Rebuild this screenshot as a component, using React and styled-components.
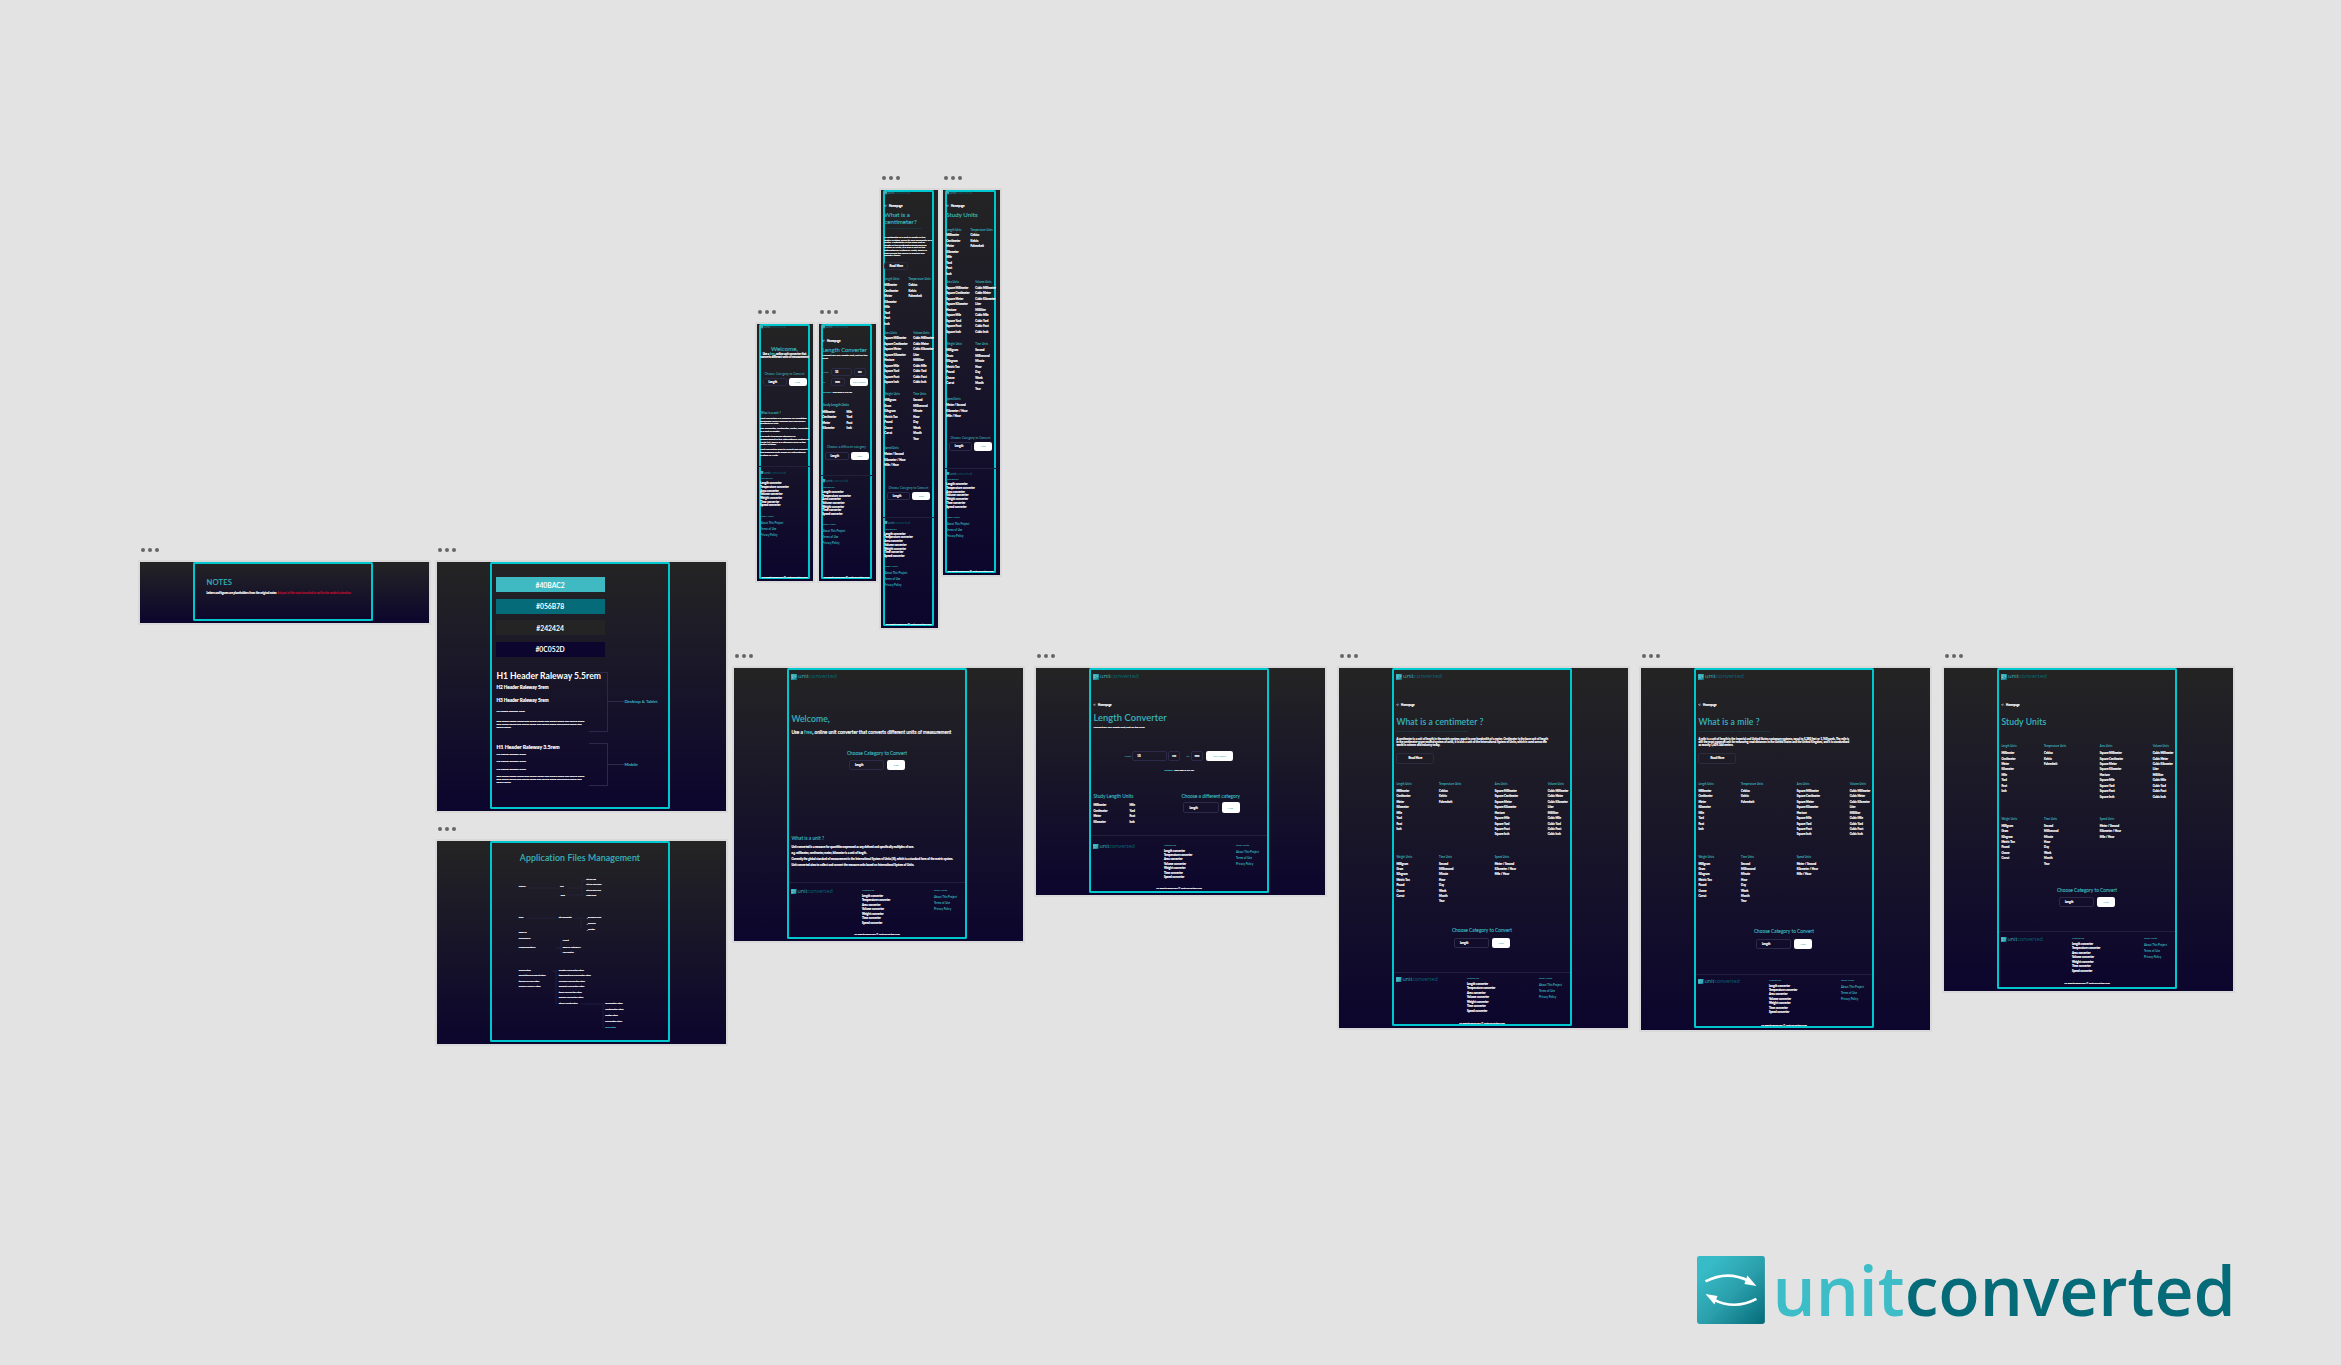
import React from "react";
import styled, { createGlobalStyle, css } from "styled-components";
import { ArrowLeft } from "lucide-react";

const TEAL = "#38B6BE";
const DEEP = "#056B78";
const LINE = "#2b2a48";
const FONT = `Lato, "Noto Sans", sans-serif`;

const inked = css`
  -webkit-text-stroke: 0.16px currentColor;
`;

const Global = createGlobalStyle`
  html, body { margin: 0; padding: 0; background: #e3e3e3; }
  * { box-sizing: border-box; }
`;

const Canvas = styled.main`
  position: relative;
  width: 2341px;
  height: 1365px;
  overflow: hidden;
  background: #e3e3e3;
  font-family: ${FONT};
`;

const FrameBox = styled.section`
  position: absolute;
  left: ${(p) => p.$x}px;
  top: ${(p) => p.$y}px;
  width: ${(p) => p.$w}px;
  height: ${(p) => p.$h}px;
  background: linear-gradient(180deg, #242424 0%, #0c052d 100%);
  box-shadow: 0 0 0 2px #d9d9d9;
`;

const Dots = styled.div`
  position: absolute;
  left: 1px;
  top: -14px;
  display: flex;
  gap: 3px;
  span {
    width: 4px;
    height: 4px;
    border-radius: 50%;
    background: #666;
  }
`;

const Page = styled.div`
  position: relative;
  display: flex;
  flex-direction: column;
  width: ${(p) => (p.$mobile ? 51 : 180)}px;
  height: calc(100% - 2px);
  margin-left: ${(p) => (p.$mobile ? 2 : 53)}px;
  padding: 0 ${(p) => (p.$mobile ? 1.3 : 4.4)}px;
  border-radius: 1.5px;
  box-shadow: inset 0 0 0 2px #00c6ce;
`;

const LogoRow = styled.div`
  display: flex;
  align-items: center;
  align-self: flex-start;
  flex: none;
  margin-top: ${(p) => p.$mt || 0}px;
  gap: ${(p) => p.$size * 0.11}px;
  font-family: "Open Sans", ${FONT};
  font-size: ${(p) => p.$size * 0.97}px;
  line-height: 1;
  font-weight: ${(p) => (p.$big ? 600 : 400)};
  white-space: nowrap;
  svg {
    display: block;
    flex: none;
    width: ${(p) => p.$size * 0.97}px;
    height: ${(p) => p.$size * 0.97}px;
  }
  b {
    font-weight: inherit;
    color: ${(p) => (p.$big ? "#3cbdc8" : TEAL)};
  }
  i {
    font-style: normal;
    color: ${DEEP};
  }
`;

const Logo = ({ size, mt, big }) => (
  <LogoRow $size={size} $mt={mt} $big={big}>
    <svg viewBox="0 0 68 68" aria-hidden="true">
      <defs>
        <linearGradient id="logoFill" x1="0" y1="0" x2="1" y2="1">
          <stop offset="0.15" stopColor="#37bcc7" />
          <stop offset="0.55" stopColor="#2a9eab" />
          <stop offset="1" stopColor="#056b78" />
        </linearGradient>
      </defs>
      <rect width="68" height="68" rx="2.5" fill="url(#logoFill)" />
      <path d="M8.5 25.5Q30 14 52 25" fill="none" stroke="#fff" strokeWidth="2.6" />
      <path d="M59.5 30L50.5 19.5L47.5 28Z" fill="#fff" />
      <path d="M59.5 43Q38 54.5 16 43.5" fill="none" stroke="#fff" strokeWidth="2.6" />
      <path d="M8.5 38L17.5 48.5L20.5 40Z" fill="#fff" />
    </svg>
    <span>
      <b>unit</b>
      <i>converted</i>
    </span>
  </LogoRow>
);

const BigLogo = styled.div`
  position: absolute;
  left: 1697px;
  top: 1256px;
`;

const Back = styled.div`
  display: flex;
  align-items: center;
  gap: 1.2px;
  margin-top: ${(p) => p.$mt}px;
  height: 3px;
  font-size: 2.8px;
  font-weight: 700;
  color: #fff;
  ${inked}
  svg {
    width: 3.5px;
    height: 3.5px;
  }
`;

const Title = styled.h1`
  margin: ${(p) => p.$mt}px 0 0;
  padding-left: ${(p) => p.$indent || 0}px;
  font-size: ${(p) => p.$size}px;
  line-height: ${(p) => p.$lh}px;
  font-weight: 500;
  letter-spacing: ${(p) => p.$ls ?? 0.12}px;
  color: ${TEAL};
  text-align: ${(p) => (p.$center ? "center" : "left")};
  -webkit-text-stroke: 0.12px currentColor;
`;

const Faint = styled.div`
  margin-top: ${(p) => p.$mt}px;
  font-size: ${(p) => p.$size || 2.6}px;
  line-height: 3px;
  color: #0f5866;
  white-space: nowrap;
  overflow: hidden;
`;

const Copy = styled.p`
  margin: ${(p) => p.$mt || 0}px 0 0;
  padding-left: ${(p) => p.$indent || 0}px;
  max-width: ${(p) => p.$w || 400}px;
  font-size: ${(p) => p.$size}px;
  line-height: ${(p) => p.$lh}px;
  font-weight: ${(p) => p.$weight || 700};
  color: #fff;
  text-align: ${(p) => (p.$center ? "center" : "left")};
  white-space: ${(p) => (p.$line ? "nowrap" : "normal")};
  ${inked}
  em {
    font-style: normal;
    color: ${TEAL};
  }
  u {
    text-decoration: none;
    color: #b3102f;
  }
`;

const UnitLines = styled.div`
  margin-top: 3.3px;
`;

const Ghost = styled.div`
  display: flex;
  align-items: center;
  justify-content: center;
  flex: none;
  margin-top: ${(p) => p.$mt}px;
  width: ${(p) => p.$w}px;
  height: ${(p) => p.$h}px;
  border: 1px solid #2c2c40;
  border-radius: 2.5px;
  font-size: 2.8px;
  font-weight: 700;
  color: #fff;
  ${inked}
`;

const UnitRow = styled.div`
  display: grid;
  grid-template-columns: ${(p) => p.$cols};
  margin-top: ${(p) => p.$mt}px;
`;

const UnitColumn = styled.div`
  display: flex;
  flex-direction: column;
  h4 {
    margin: 0 0 ${(p) => p.$gap}px;
    font-size: 2.7px;
    line-height: 3px;
    font-weight: 700;
    color: ${TEAL};
    white-space: nowrap;
  }
  span {
    font-size: 2.8px;
    line-height: ${(p) => p.$step}px;
    font-weight: 700;
    color: #fff;
    white-space: nowrap;
    ${inked}
  }
`;

const Units = ({ title, items, gap = 3.1, step = 5.4 }) => (
  <UnitColumn $gap={gap} $step={step}>
    <h4>{title}</h4>
    {items.map((t) => (
      <span key={t}>{t}</span>
    ))}
  </UnitColumn>
);

const Chooser = styled.div`
  display: flex;
  flex-direction: column;
  align-items: ${(p) => (p.$left ? "flex-start" : "center")};
  flex: none;
  margin-top: ${(p) => p.$mt}px;
`;

const ChooserTitle = styled.div`
  font-size: ${(p) => p.$size}px;
  line-height: 6px;
  font-weight: 500;
  color: ${TEAL};
  white-space: nowrap;
  ${(p) => p.$size > 4 && "-webkit-text-stroke: 0.1px currentColor;"}
`;

const PickRow = styled.div`
  display: flex;
  gap: ${(p) => (p.$small ? 2 : 2.7)}px;
  margin-top: ${(p) => p.$mt}px;
  margin-left: ${(p) => p.$shift || 0}px;
`;

const Field = styled.div`
  display: flex;
  align-items: center;
  flex: none;
  width: ${(p) => p.$w}px;
  height: ${(p) => p.$h}px;
  padding-left: ${(p) => p.$pad ?? 5}px;
  border: 1px solid ${LINE};
  border-radius: 2px;
  font-size: 2.8px;
  font-weight: 700;
  color: #fff;
  ${inked}
`;

const WhiteButton = styled.div`
  display: flex;
  align-items: center;
  justify-content: center;
  flex: none;
  width: ${(p) => p.$w}px;
  height: ${(p) => p.$h}px;
  border-radius: 2.2px;
  background: #fff;
  font-size: 2.6px;
  color: #2aa5ad;
`;

const Picker = ({ title, mt, pickMt = 4, size = 4.8, w = 35.5, h = 10.4, bw = 18, small, left, shift }) => (
  <Chooser $mt={mt} $left={left}>
    <ChooserTitle $size={size}>{title}</ChooserTitle>
    <PickRow $mt={pickMt} $small={small} $shift={shift}>
      <Field $w={w} $h={h}>Length</Field>
      <WhiteButton $w={bw} $h={h}>Find</WhiteButton>
    </PickRow>
  </Chooser>
);

const Divider = styled.hr`
  flex: none;
  margin: ${(p) => p.$mt}px -2px 0;
  height: 1px;
  border: 0;
  background: #22213c;
`;

const FooterGrid = styled.div`
  display: grid;
  grid-template-columns: 70.5px 72px 1fr;
  align-items: start;
  padding-top: ${(p) => p.$top}px;
`;

const FooterStack = styled.div`
  display: flex;
  flex-direction: column;
  padding-top: 3.2px;
`;

const FootHead = styled.h5`
  margin: ${(p) => p.$mt || 0}px 0 2px;
  font-size: 2.6px;
  line-height: 3px;
  font-weight: 700;
  color: ${TEAL};
  white-space: nowrap;
`;

const FootList = styled.div`
  display: flex;
  flex-direction: column;
  span {
    font-size: 2.8px;
    line-height: ${(p) => p.$step}px;
    font-weight: 700;
    color: #fff;
    white-space: nowrap;
    ${inked}
  }
`;

const FootLinks = styled.div`
  display: flex;
  flex-direction: column;
  span {
    font-size: 2.8px;
    line-height: 6px;
    font-weight: 700;
    color: ${TEAL};
    white-space: nowrap;
  }
`;

const Rights = styled.div`
  margin-top: auto;
  margin-bottom: ${(p) => p.$mb}px;
  font-size: 2.5px;
  line-height: 3px;
  font-weight: 700;
  text-align: center;
  color: #fff;
  white-space: nowrap;
  ${inked}
`;

const CATEGORIES = ["Length converter", "Temperature converter", "Area converter", "Volume converter", "Weight converter", "Time converter", "Speed converter"];
const LINKS = ["About This Project", "Terms of Use", "Privacy Policy"];

const Footer = ({ top = 3.8, mt, mb = 3, mobile }) => (
  <>
    <Divider $mt={mt} />
    {mobile ? (
      <FooterStack>
        <Logo size={3.5} />
        <FootHead $mt={3.3}>Categories</FootHead>
        <FootList $step={3.7}>{CATEGORIES.map((t) => <span key={t}>{t}</span>)}</FootList>
        <FootHead $mt={6.5}>Study Units</FootHead>
        <FootLinks>{LINKS.map((t) => <span key={t}>{t}</span>)}</FootLinks>
      </FooterStack>
    ) : (
      <FooterGrid $top={top}>
        <Logo size={5.6} />
        <div>
          <FootHead>Categories</FootHead>
          <FootList $step={4.45}>{CATEGORIES.map((t) => <span key={t}>{t}</span>)}</FootList>
        </div>
        <div>
          <FootHead>Study Units</FootHead>
          <FootLinks>{LINKS.map((t) => <span key={t}>{t}</span>)}</FootLinks>
        </div>
      </FooterGrid>
    )}
    <Rights $mb={mb}>All Rights Reserved © unitconverted.com</Rights>
  </>
);

const LENGTH = ["Millimeter", "Centimeter", "Meter", "Kilometer", "Mile", "Yard", "Foot", "Inch"];
const TEMP = ["Celsius", "Kelvin", "Fahrenheit"];
const AREA = ["Square Millimeter", "Square Centimeter", "Square Meter", "Square Kilometer", "Hectare", "Square Mile", "Square Yard", "Square Foot", "Square Inch"];
const VOLUME = ["Cubic Millimeter", "Cubic Meter", "Cubic Kilometer", "Liter", "Milliliter", "Cubic Mile", "Cubic Yard", "Cubic Foot", "Cubic Inch"];
const WEIGHT = ["Milligram", "Gram", "Kilogram", "Metric Ton", "Pound", "Ounce", "Carrat"];
const TIME = ["Second", "Millisecond", "Minute", "Hour", "Day", "Week", "Month", "Year"];
const SPEED = ["Meter / Second", "Kilometer / Hour", "Mile / Hour"];

const DeskUnits = ({ mt }) => (
  <>
    <UnitRow $mt={mt} $cols="42.7px 55.7px 53px 1fr">
      <Units title="Length Units" items={LENGTH} />
      <Units title="Temperature Units" items={TEMP} />
      <Units title="Area Units" items={AREA} />
      <Units title="Volume Units" items={VOLUME} />
    </UnitRow>
    <UnitRow $mt={17.8} $cols="42.7px 55.7px 53px 1fr">
      <Units title="Weight Units" items={WEIGHT} />
      <Units title="Time Units" items={TIME} />
      <Units title="Speed Units" items={SPEED} />
    </UnitRow>
  </>
);

const MobileUnits = ({ mt, gaps }) => (
  <>
    <UnitRow $mt={mt} $cols="24.3px 1fr">
      <Units title="Length Units" items={LENGTH} gap={1.7} step={5.5} />
      <Units title="Temperature Units" items={TEMP} gap={1.7} step={5.5} />
    </UnitRow>
    <UnitRow $mt={gaps[0]} $cols="29px 1fr">
      <Units title="Area Units" items={AREA} gap={1.7} step={5.5} />
      <Units title="Volume Units" items={VOLUME} gap={1.7} step={5.5} />
    </UnitRow>
    <UnitRow $mt={gaps[1]} $cols="29px 1fr">
      <Units title="Weight Units" items={WEIGHT} gap={1.7} step={5.5} />
      <Units title="Time Units" items={TIME} gap={1.7} step={5.5} />
    </UnitRow>
    <UnitRow $mt={gaps[2]} $cols="29px 1fr">
      <Units title="Speed Units" items={SPEED} gap={1.7} step={5.5} />
    </UnitRow>
  </>
);

const WHAT_CM = "A centimeter is a unit of length in the metric system, equal to one hundredth of a meter. Centimeter is the base unit of length in the centimetre-gram-second system of units, it is also a unit of the International System of Units, which is used across the world in science and industry today.";
const WHAT_MI = "A mile is a unit of length in the imperial and United States customary systems, equal to 5,280 feet or 1,760 yards. The mile is still the most common unit for measuring road distances in the United States and the United Kingdom, and it is standardised as exactly 1,609.344 meters.";
const UNIT_LINES = [
  "Unit converted is a measure for quantities expressed as any defined and specifically multiples of one.",
  "e.g. millimeter, centimeter, meter, kilometer is a unit of length.",
  "Currently the global standard of measurement is the International System of Units (SI), which is a standard form of the metric system.",
  "Unit converted aims to collect and convert the measure units based on International System of Units.",
];

const Frame = ({ x, y, w = 289, h, children }) => (
  <FrameBox $x={x} $y={y} $w={w} $h={h}>
    <Dots><span /><span /><span /></Dots>
    {children}
  </FrameBox>
);

const ArticlePage = ({ title, text, extra = 0 }) => (
  <Page>
    <Logo size={6.15} mt={6} />
    <Back $mt={23.5}><ArrowLeft strokeWidth={2.5} />Homepage</Back>
    <Title $mt={10.5} $size={8.6} $lh={10}>{title}</Title>
    <Faint $mt={3.5}>Convert centimeter to any other length unit with unitconverted</Faint>
    <Copy $mt={4.5} $size={2.75} $lh={3} $w={152}>{text}</Copy>
    <Ghost $mt={6} $w={38} $h={11}>Read More</Ghost>
    <DeskUnits mt={19} />
    <Picker title="Choose Category to Convert" mt={22 + extra} pickMt={4.7} />
    <Footer mt={24.3} top={3.8} mb={1} />
  </Page>
);

const Label = styled.span`
  font-size: 2.6px;
  font-weight: 700;
  color: ${TEAL};
`;

const FormRow = styled.div`
  display: flex;
  align-items: center;
  justify-content: ${(p) => (p.$left ? "flex-start" : "center")};
  gap: ${(p) => p.$gap || 1}px;
  margin-top: ${(p) => p.$mt}px;
`;

const Pad = styled.span`
  flex: none;
  width: ${(p) => p.$w}px;
`;

const TwoCol = styled.div`
  display: grid;
  grid-template-columns: 88px 1fr;
  margin-top: ${(p) => p.$mt}px;
`;

const StudyTitle = styled.div`
  font-size: ${(p) => p.$size}px;
  line-height: ${(p) => p.$lh || 6}px;
  font-weight: 500;
  color: ${TEAL};
  white-space: nowrap;
  margin-top: ${(p) => p.$mt || 0}px;
  -webkit-text-stroke: 0.1px currentColor;
`;

const Pairs = styled.div`
  display: grid;
  grid-template-columns: ${(p) => p.$col}px 1fr;
  margin-top: ${(p) => p.$mt}px;
  span {
    font-size: 2.8px;
    line-height: 5.4px;
    font-weight: 700;
    color: #fff;
    ${inked}
  }
`;

const PAIRS = ["Millimeter", "Mile", "Centimeter", "Yard", "Meter", "Foot", "Kilometer", "Inch"];

/* style guide */
const Swatch = styled.div`
  display: flex;
  align-items: center;
  justify-content: center;
  width: 109px;
  height: 15px;
  margin: ${(p) => p.$mt}px 0 0 1.2px;
  background: ${(p) => p.$c};
  color: #fff;
  font-size: 6.8px;
  font-weight: 700;
`;

const TypeRow = styled.div`
  display: flex;
  align-items: center;
  margin-top: ${(p) => p.$mt}px;
  margin-left: 2px;
`;

const TypeBox = styled.div`
  position: relative;
  flex: none;
  width: 112px;
  height: ${(p) => p.$h}px;
  border-right: 1px solid ${LINE};
  &::before,
  &::after {
    content: "";
    position: absolute;
    right: 0;
    width: 18px;
    height: 1px;
    background: ${LINE};
  }
  &::before { top: 0; }
  &::after { bottom: 0; }
`;

const Wire = styled.span`
  flex: none;
  width: 16px;
  height: 1px;
  background: ${LINE};
`;

const TypeLabel = styled.span`
  font-size: 4.4px;
  font-weight: 500;
  color: ${TEAL};
  white-space: nowrap;
  -webkit-text-stroke: 0.1px currentColor;
`;

const Sample = styled.div`
  margin-top: ${(p) => p.$mt}px;
  font-size: ${(p) => p.$size}px;
  line-height: ${(p) => p.$lh}px;
  font-weight: 700;
  color: #fff;
  white-space: ${(p) => (p.$wrap ? "normal" : "nowrap")};
  max-width: 92px;
  ${(p) => p.$size < 5.5 && inked}
`;

const LOREM = "quis dolore sapien ipsum quis dolore ipsum quis dolore ipsum quis dolore ipsum quis dolore ipsum quis dolore ipsum quis dolore ipsum quis dolore ipsum quis dolore ipsum";

/* file tree */
const FileTitle = styled.h2`
  margin: 11px 0 0;
  font-size: 8.8px;
  line-height: 11px;
  font-weight: 500;
  letter-spacing: 0.12px;
  text-align: center;
  color: ${TEAL};
  -webkit-text-stroke: 0.12px currentColor;
`;

const FileNode = styled.span`
  position: absolute;
  left: ${(p) => p.$x}px;
  top: ${(p) => p.$y - 1.5}px;
  font-size: 2.6px;
  line-height: 3px;
  font-weight: 700;
  white-space: nowrap;
  color: ${(p) => (p.$on ? TEAL : "#fff")};
  ${inked}
`;

const TreeLines = styled.svg`
  position: absolute;
  left: 0;
  top: 0;
  width: 180px;
  height: 200px;
  pointer-events: none;
`;

const TREE = [
  [28.7, 45.7, "public"], [70, 45.7, "css"], [70.7, 54, "img"],
  [96.3, 38, "style.css"], [96.3, 43, "style.css.map"], [96.3, 49, "style.min.css"], [96.3, 54, "logo.png"],
  [28.7, 76, "scss"], [68.7, 76, "stylesheets"], [96.7, 76, "_globals.scss"], [96.7, 82, "_mobile"], [96.7, 88, "_footer"],
  [28.7, 91, "main.js"], [28.7, 97.7, "libraries.js"], [28.7, 106, "components.js"],
  [72.7, 99.7, "chart"], [72.7, 106, "search category"], [72.7, 111.7, "calculator"],
  [28.7, 129.7, "index.html"], [28.7, 134.7, "about-this-project.html"], [28.7, 140.7, "terms-of-use.html"], [28.7, 145.7, "privacy-policy.html"],
  [68.7, 129.7, "length-converter.html"], [68.7, 134.7, "temperature-converter.html"], [68.7, 140.7, "volume-converter.html"], [68.7, 145.7, "weight-converter.html"], [68.7, 151.7, "time-converter.html"], [68.7, 156.7, "speed-converter.html"], [68.7, 162.7, "study-units.html"],
  [115.3, 162.7, "millimeter.html"], [115.3, 168.7, "centimeter.html"], [115.3, 174.7, "meter.html"], [115.3, 180.7, "kilometer.html"], [115.3, 186.7, "mile.html", true],
];

const App = () => (
  <>
    <Global />
    <Canvas>
      <Frame x={140} y={562} h={60.5}>
        <Page>
          <Title $mt={16} $size={7.6} $lh={8} $ls={0.2} $indent={9}>NOTES</Title>
          <Copy $mt={5.5} $size={2.7} $lh={3} $indent={9} $line>
            Letters and figures are placeholders from the original notes <u>this part of the note is marked in red for the reader's attention</u>
          </Copy>
        </Page>
      </Frame>

      <Frame x={437} y={562} h={248.5}>
        <Page>
          <Swatch $mt={15} $c="#40BAC2">#40BAC2</Swatch>
          <Swatch $mt={6.6} $c="#056B78">#056B78</Swatch>
          <Swatch $mt={6.6} $c="#242424">#242424</Swatch>
          <Swatch $mt={6.6} $c="#0C052D">#0C052D</Swatch>
          <TypeRow $mt={15}>
            <TypeBox $h={60}>
              <Sample $mt={0} $size={8.6} $lh={9}>H1 Header Raleway 5.5rem</Sample>
              <Sample $mt={3.5} $size={4.6} $lh={6}>H2 Header Raleway 5rem</Sample>
              <Sample $mt={7} $size={4.6} $lh={6}>H3 Header Raleway 5rem</Sample>
              <Sample $mt={6.5} $size={2.5} $lh={3}>H4 Header Raleway 2rem</Sample>
              <Sample $mt={7} $size={2.5} $lh={3.1} $wrap>{LOREM}</Sample>
            </TypeBox>
            <Wire />
            <TypeLabel>Desktop &amp; Tablet</TypeLabel>
          </TypeRow>
          <TypeRow $mt={11}>
            <TypeBox $h={43}>
              <Sample $mt={1} $size={5.2} $lh={6}>H1 Header Raleway 3.5rem</Sample>
              <Sample $mt={3.5} $size={2.6} $lh={3}>H2 Header Raleway 2rem</Sample>
              <Sample $mt={4} $size={2.6} $lh={3}>H3 Header Raleway 2rem</Sample>
              <Sample $mt={5} $size={2.6} $lh={3}>H4 Header Raleway 2rem</Sample>
              <Sample $mt={3.5} $size={2.5} $lh={3.1} $wrap>{LOREM}</Sample>
            </TypeBox>
            <Wire />
            <TypeLabel>Mobile</TypeLabel>
          </TypeRow>
        </Page>
      </Frame>

      <Frame x={437} y={841} h={202.5}>
        <Page>
          <FileTitle>Application Files Management</FileTitle>
          <TreeLines viewBox="0 0 180 200" fill="none" stroke={LINE} strokeWidth="0.6">
            <path d="M38 47H68M78 47H92M92 38V54M74 54H94M92 40H95" />
            <path d="M38 77H66M84 77H94M91 77V88M66 107H71M71 100V112" />
            <path d="M62 130H67M66 130V163M90 163H113M113 163V187" />
          </TreeLines>
          {TREE.map(([x, y, t, on]) => (
            <FileNode key={t + y} $x={x} $y={y} $on={on}>{t}</FileNode>
          ))}
        </Page>
      </Frame>

      <Frame x={734} y={668} h={272.5}>
        <Page>
          <Logo size={6.15} mt={6} />
          <Title $mt={34} $size={8.6} $lh={10}>Welcome,</Title>
          <Copy $mt={5.3} $size={4.7} $lh={6} $weight={600}>Use a <em>free</em>, online unit converter that converts different units of measurement</Copy>
          <Picker title="Choose Category to Convert" mt={14.4} />
          <StudyTitle $mt={65} $size={4.8}>What is a unit ?</StudyTitle>
          <UnitLines>
            {UNIT_LINES.map((t) => <Copy key={t} $size={2.75} $lh={6}>{t}</Copy>)}
          </UnitLines>
          <Footer mt={13.7} top={5.8} mb={3} />
        </Page>
      </Frame>

      <Frame x={1036} y={668} h={227}>
        <Page>
          <Logo size={6.15} mt={6} />
          <Back $mt={23.5}><ArrowLeft strokeWidth={2.5} />Homepage</Back>
          <Title $mt={6.5} $size={9.3} $lh={10}>Length Converter</Title>
          <Copy $mt={3.5} $size={2.6} $lh={3}>Convert any any length unit, just fill the form</Copy>
          <FormRow $mt={21.5} $gap={1}>
            <Label>From:</Label>
            <Field $w={35} $h={10.2} $pad={4}>10</Field>
            <Field $w={12} $h={10.2} $pad={3}>cm</Field>
            <Pad $w={4} />
            <Label>To:</Label>
            <Field $w={12.5} $h={10.2} $pad={3}>mm</Field>
            <Pad $w={1} />
            <WhiteButton $w={27} $h={10.2}>CONVERT!</WhiteButton>
          </FormRow>
          <Copy $mt={7.5} $size={2.6} $lh={3} $center><em>Answer:</em> 100 mm is 10 cm</Copy>
          <TwoCol $mt={21.5}>
            <div>
              <StudyTitle $size={4.8}>Study Length Units</StudyTitle>
              <Pairs $mt={4.3} $col={36}>{PAIRS.map((t) => <span key={t}>{t}</span>)}</Pairs>
            </div>
            <Picker title="Choose a different category" mt={0} pickMt={3.3} size={4.8} left shift={2} />
          </TwoCol>
          <Footer mt={10} top={7.5} mb={3.5} />
        </Page>
      </Frame>

      <Frame x={1339} y={668} h={359.5}>
        <ArticlePage title="What is a centimeter ?" text={WHAT_CM} />
      </Frame>

      <Frame x={1641} y={668} h={362}>
        <ArticlePage title="What is a mile ?" text={WHAT_MI} extra={1.5} />
      </Frame>

      <Frame x={1944} y={668} h={322.5}>
        <Page>
          <Logo size={6.15} mt={6} />
          <Back $mt={23.5}><ArrowLeft strokeWidth={2.5} />Homepage</Back>
          <Title $mt={10.5} $size={8.6} $lh={10}>Study Units</Title>
          <DeskUnits mt={18.2} />
          <Picker title="Choose Category to Convert" mt={19.9} />
          <Footer mt={23.3} top={5.2} mb={4} />
        </Page>
      </Frame>

      <Frame x={757} y={324} w={56} h={257}>
        <Page $mobile>
          <Logo size={3.5} mt={1.2} />
          <Title $mt={16.3} $size={6} $lh={8} $center>Welcome,</Title>
          <Copy $mt={0.5} $size={2.7} $lh={2.9} $center>Use a <em>free</em>, online unit converter that converts different units of measurement</Copy>
          <Picker title="Choose Category to Convert" mt={11.8} size={3.2} pickMt={1} w={24} h={8.3} bw={18} small />
          <StudyTitle $mt={26.2} $size={3} $lh={3}>What is a unit ?</StudyTitle>
          <Copy $mt={2.5} $size={2.5} $lh={2.65}>{UNIT_LINES[0]}</Copy>
          <Copy $mt={2.5} $size={2.5} $lh={2.65}>{UNIT_LINES[1]}</Copy>
          <Copy $mt={2.5} $size={2.5} $lh={2.65}>{UNIT_LINES[2]}</Copy>
          <Copy $mt={2.5} $size={2.5} $lh={2.65}>{UNIT_LINES[3]}</Copy>
          <Footer mt={9} mobile mb={0.5} />
        </Page>
      </Frame>

      <Frame x={819} y={324} w={57} h={257}>
        <Page $mobile>
          <Logo size={3.5} mt={1.2} />
          <Back $mt={10.8}><ArrowLeft strokeWidth={2.5} />Homepage</Back>
          <Title $mt={3.3} $size={5.8} $lh={7} $ls={0}>Length Converter</Title>
          <Copy $mt={1.7} $size={2.6} $lh={3}>Convert any any length unit, just fill the form</Copy>
          <FormRow $mt={7.2} $gap={2} $left>
            <Label>From:</Label>
            <Field $w={21} $h={8.3} $pad={3}>10</Field>
            <Field $w={12.5} $h={8.3} $pad={3}>cm</Field>
          </FormRow>
          <FormRow $mt={1.7} $gap={2} $left>
            <Label>To:</Label>
            <Pad $w={1.5} />
            <Field $w={14} $h={8.3} $pad={3}>mm</Field>
            <Pad $w={1} />
            <WhiteButton $w={18} $h={8.3}>CONVERT!</WhiteButton>
          </FormRow>
          <Copy $mt={5.5} $size={2.6} $lh={3}><em>Answer:</em> 100 mm is 10 cm</Copy>
          <StudyTitle $mt={8.7} $size={3.2} $lh={5}>Study Length Units</StudyTitle>
          <Pairs $mt={1.8} $col={24.3}>{PAIRS.map((t) => <span key={t}>{t}</span>)}</Pairs>
          <Picker title="Choose a different category" mt={12.5} size={3.2} pickMt={1.7} w={24} h={8.3} bw={18} small />
          <Footer mt={15} mobile mb={0.5} />
        </Page>
      </Frame>

      <Frame x={881} y={190} w={57} h={438}>
        <Page $mobile>
          <Logo size={3.5} mt={1.2} />
          <Back $mt={9.8}><ArrowLeft strokeWidth={2.5} />Homepage</Back>
          <Title $mt={3.5} $size={6.2} $lh={7.3} $ls={0}>What is a centimeter?</Title>
          <Faint $mt={1.6} $size={2.2}>Convert centimeter to any other length</Faint>
          <Copy $mt={6.8} $size={2.5} $lh={2.65} $w={48}>{WHAT_CM}</Copy>
          <Ghost $mt={3.7} $w={24} $h={8.7}>Read More</Ghost>
          <MobileUnits mt={8} gaps={[4.6, 7.5, 5.3]} />
          <Picker title="Choose Category to Convert" mt={16} size={3.2} pickMt={1.3} w={23.3} h={8.3} bw={18} small />
          <Footer mt={16.7} mobile mb={0.5} />
        </Page>
      </Frame>

      <Frame x={943} y={190} w={57} h={385}>
        <Page $mobile>
          <Logo size={3.5} mt={1.2} />
          <Back $mt={9.8}><ArrowLeft strokeWidth={2.5} />Homepage</Back>
          <Title $mt={3.5} $size={6.2} $lh={7.3} $ls={0}>Study Units</Title>
          <MobileUnits mt={10.5} gaps={[3.8, 8, 6.3]} />
          <Picker title="Choose Category to Convert" mt={15.3} size={3.2} pickMt={1.4} w={23.3} h={8.3} bw={18} small />
          <Footer mt={17} mobile mb={0.5} />
        </Page>
      </Frame>

      <BigLogo>
        <Logo size={70} big />
      </BigLogo>
    </Canvas>
  </>
);

export default App;
